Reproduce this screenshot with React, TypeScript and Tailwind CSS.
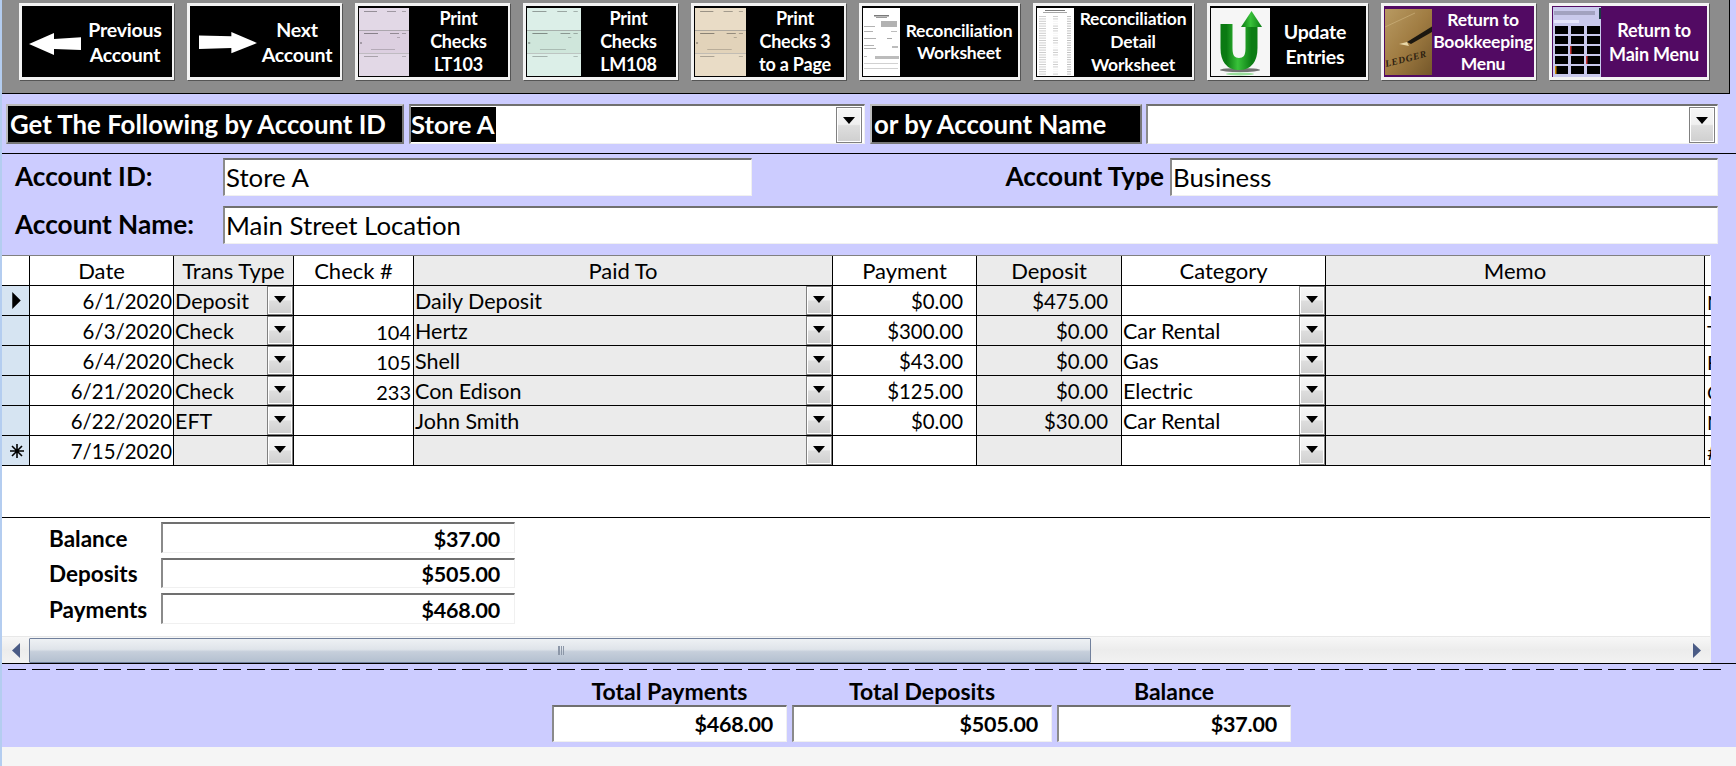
import type { ReactNode } from "react";

// Access-style account register form: toolbar, account pickers, fields,
// transaction grid and totals. Thumbnails on the toolbar are small SVG drawings.

function Bars({ rows }: { rows: number[][] }) {
  return (
    <>
      {rows.map(([x, y, bw, bh, o], i) => (
        <rect key={i} x={x} y={y} width={bw} height={bh} fill="#222" opacity={o} />
      ))}
    </>
  );
}

function CheckThumb({ color, band, w }: { color: string; band: string; w: number }) {
  return (
    <svg viewBox="0 0 50 68" preserveAspectRatio="none" style={{ width: w }} className="h-[68px] shrink-0">
      <rect width="50" height="68" fill={color} />
      <rect y="22" width="50" height="23" fill={band} />
      <rect y="22" width="50" height="0.6" fill="#8a8a8a" />
      <rect y="45" width="50" height="0.6" fill="#a8a8a8" />
      <Bars
        rows={[
          [5, 3, 13, 1, 0.4],
          [28, 3, 9, 1, 0.35],
          [43, 3, 4, 1, 0.3],
          [5, 25, 14, 1, 0.45],
          [31, 25, 9, 1, 0.4],
          [43, 25, 4, 1, 0.3],
          [1, 34, 2, 2, 0.3],
          [38, 29, 3, 1, 0.25],
          [12, 41, 24, 0.7, 0.3],
          [5, 48, 14, 1, 0.3],
          [43, 48, 4, 1, 0.25],
        ]}
      />
    </svg>
  );
}

function ReportThumb({ w, dense }: { w: number; dense?: boolean }) {
  const rows: number[][] = [];
  if (dense) {
    rows.push([8, 2, 20, 1, 0.6], [6, 4, 24, 1, 0.4]);
    for (let y = 8; y < 66; y += 2.4) {
      rows.push([2, y, 7, 1, 0.22], [16, y, 5, 1, y % 3 < 1 ? 0.05 : 0.22], [30, y, 4, 1, 0.28]);
    }
  } else {
    rows.push(
      [11, 7, 15, 1.5, 0.6],
      [13, 9, 11, 1, 0.45],
      [18, 13, 16, 6, 0.35],
      [1, 18, 11, 1, 0.35],
      [1, 23, 9, 1, 0.35],
      [28, 23, 6, 1, 0.3],
      [1, 30, 12, 1, 0.35],
      [24, 30, 5, 1, 0.4],
      [1, 37, 10, 1, 0.35],
      [1, 40, 12, 1, 0.35],
      [29, 38, 6, 2, 0.3],
      [1, 48, 3, 1, 0.3],
      [12, 48, 24, 3, 0.3],
      [1, 55, 34, 0.6, 0.35],
      [1, 60, 34, 0.6, 0.35],
    );
  }
  return (
    <svg viewBox="0 0 37 68" preserveAspectRatio="none" style={{ width: w }} className="h-[68px] shrink-0">
      <rect width="37" height="68" fill="#fff" />
      <Bars rows={rows} />
    </svg>
  );
}

function UpdateThumb() {
  return (
    <svg viewBox="0 0 59 68" className="h-[68px] w-[59px] shrink-0">
      <defs>
        <linearGradient id="u-green" x1="0" x2="1" y1="0" y2="0">
          <stop offset="0" stopColor="#0b7a12" />
          <stop offset="0.45" stopColor="#39c23a" />
          <stop offset="1" stopColor="#0c7d14" />
        </linearGradient>
      </defs>
      <rect width="59" height="68" fill="#f6f6f6" />
      <ellipse cx="29" cy="62" rx="20" ry="2" fill="#3a3a3a" opacity="0.7" />
      <ellipse cx="29" cy="66" rx="14" ry="1.5" fill="#9adf9c" />
      <path d="M15.5 16V40Q15.5 56 28 56Q40.5 56 40.5 40V18" fill="none" stroke="url(#u-green)" strokeWidth="12" />
      <polygon points="30,19 51,19 40.5,3" fill="url(#u-green)" />
    </svg>
  );
}

function LedgerThumb() {
  return (
    <svg viewBox="0 0 47 66" className="h-[66px] w-[47px] shrink-0">
      <defs>
        <linearGradient id="ledger" x1="0" x2="1" y1="0" y2="1">
          <stop offset="0" stopColor="#b89a62" />
          <stop offset="0.5" stopColor="#a07c42" />
          <stop offset="1" stopColor="#74572a" />
        </linearGradient>
      </defs>
      <rect width="47" height="66" fill="url(#ledger)" />
      <path d="M0 18L30 4" stroke="#d8c08c" strokeWidth="1" opacity="0.5" />
      <text x="1" y="58" fontFamily="Liberation Serif, serif" fontStyle="italic" fontWeight="700" fontSize="9.5" textLength="42" fill="#2c2010" transform="rotate(-14 1 58)">
        LEDGER
      </text>
      <path d="M22 33L48 17L47 23L26 35Z" fill="#1b1710" />
      <path d="M22 33L14 35L24 37Z" fill="#e9d8a8" />
    </svg>
  );
}

function MenuThumb() {
  const cellColors = ["#000", "#000", "#000"];
  return (
    <svg viewBox="0 0 48 70" className="h-[70px] w-[48px] shrink-0">
      <rect width="48" height="70" fill="#c9c9ec" />
      <rect x="1" y="4" width="41" height="4" fill="#5a5a70" opacity="0.35" />
      <rect x="46" y="1" width="2" height="11" fill="#1d3a44" />
      <rect x="1" y="13" width="25" height="3" fill="#e6e6fa" />
      {[19, 29, 39, 49, 59].map((y) =>
        cellColors.map((c, i) => <rect key={`${y}-${i}`} x={2 + i * 16} y={y} width="13" height="8" fill={c} />),
      )}
      <rect x="17" y="39" width="1.5" height="8" fill="#c33" />
      <rect x="33" y="49" width="1.5" height="8" fill="#c33" />
      <rect x="2" y="59" width="1.5" height="8" fill="#c80" />
    </svg>
  );
}

function ArrowThumb({ dir }: { dir: "left" | "right" }) {
  return (
    <svg
      viewBox="0 0 52 26"
      preserveAspectRatio="none"
      className={dir === "left" ? "mt-[4px] ml-[6px] h-[22px] w-[52px] shrink-0" : "mt-[3px] ml-[8px] h-[22px] w-[58px] shrink-0"}
    >
      {dir === "left" ? (
        <polygon points="0,13 25,0 25,7 52,5 52,20 25,19 25,26" fill="#fff" />
      ) : (
        <polygon points="52,13 29,0 29,5 0,4 0,20 29,19 29,25" fill="#fff" />
      )}
    </svg>
  );
}

type Btn = { w: string; lines: string[]; thumb: ReactNode; purple?: boolean; text: string };

const BUTTONS: Btn[] = [
  { w: "w-[155px]", lines: ["Previous", "Account"], thumb: <ArrowThumb dir="left" />, text: "pr-[3px] text-[19.5px] leading-[25px]" },
  { w: "w-[155px]", lines: ["Next", "Account"], thumb: <ArrowThumb dir="right" />, text: "pr-[3px] text-[19.5px] leading-[25px]" },
  { w: "w-[155px]", lines: ["Print", "Checks", "LT103"], thumb: <CheckThumb color="#e2d8e6" band="#dccfe0" w={50} />, text: "text-[18px] leading-[23px]" },
  { w: "w-[155px]", lines: ["Print", "Checks", "LM108"], thumb: <CheckThumb color="#dcefe8" band="#cfe6db" w={54} />, text: "text-[18px] leading-[23px]" },
  { w: "w-[155px]", lines: ["Print", "Checks 3", "to a Page"], thumb: <CheckThumb color="#e9dcc6" band="#e2d3ba" w={51} />, text: "text-[18px] leading-[23px]" },
  { w: "w-[161px]", lines: ["Reconciliation", "Worksheet"], thumb: <ReportThumb w={37} />, text: "text-[17.5px] leading-[22px]" },
  { w: "w-[161px]", lines: ["Reconciliation", "Detail", "Worksheet"], thumb: <ReportThumb w={37} dense />, text: "text-[17.5px] leading-[23px]" },
  { w: "w-[161px]", lines: ["Update", "Entries"], thumb: <UpdateThumb />, text: "mt-[5px] pr-[6px] text-[19.5px] leading-[25.5px]" },
  { w: "w-[155px]", lines: ["Return to", "Bookkeeping", "Menu"], thumb: <LedgerThumb />, purple: true, text: "text-[17.5px] leading-[22px]" },
  { w: "w-[160px]", lines: ["Return to", "Main Menu"], thumb: <MenuThumb />, purple: true, text: "text-[18px] leading-[24px]" },
];

function ToolButton({ btn }: { btn: Btn }) {
  return (
    <div className={`${btn.w} h-[77px] shrink-0 border-[3px] border-r-2 border-[#f3f3f3] shadow-[1px_1px_0_#555]`}>
      <div className={`flex h-full items-center pl-px ${btn.purple ? "bg-[#520a63]" : "bg-black"}`}>
        {btn.thumb}
        <div className={`min-w-0 flex-1 whitespace-nowrap text-center font-bold tracking-[-0.2px] text-white ${btn.text}`}>
          {btn.lines.map((l) => (
            <div key={l}>{l}</div>
          ))}
        </div>
      </div>
    </div>
  );
}

function DropArrow({ className }: { className: string }) {
  return (
    <div className={`flex shrink-0 justify-center border border-[#808080] bg-[linear-gradient(#f6f6f6_0,#f0f0f0_48%,#dedede_52%,#cfcfcf_100%)] shadow-[inset_0_0_0_1px_#fff] ${className}`}>
      <svg viewBox="0 0 12 7" className="mt-[9px] h-[7px] w-[12px]">
        <polygon points="0,0 12,0 6,7" fill="#000" />
      </svg>
    </div>
  );
}

const GRID =
  "grid grid-cols-[28px_144px_120px_120px_419px_144px_145px_204px_379px_6px] auto-rows-[30px]";

type Row = {
  date: string;
  type: string;
  check: string;
  paid: string;
  pay: string;
  dep: string;
  cat: string;
  memo: string;
  mark: "current" | "new" | "";
};

const ROWS: Row[] = [
  { date: "6/1/2020", type: "Deposit", check: "", paid: "Daily Deposit", pay: "$0.00", dep: "$475.00", cat: "", memo: "N", mark: "current" },
  { date: "6/3/2020", type: "Check", check: "104", paid: "Hertz", pay: "$300.00", dep: "$0.00", cat: "Car Rental", memo: "T", mark: "" },
  { date: "6/4/2020", type: "Check", check: "105", paid: "Shell", pay: "$43.00", dep: "$0.00", cat: "Gas", memo: "F", mark: "" },
  { date: "6/21/2020", type: "Check", check: "233", paid: "Con Edison", pay: "$125.00", dep: "$0.00", cat: "Electric", memo: "C", mark: "" },
  { date: "6/22/2020", type: "EFT", check: "", paid: "John Smith", pay: "$0.00", dep: "$30.00", cat: "Car Rental", memo: "N", mark: "" },
  { date: "7/15/2020", type: "", check: "", paid: "", pay: "", dep: "", cat: "", memo: "#", mark: "new" },
];

const CELL = "flex items-center overflow-hidden whitespace-nowrap border-r border-b border-black";
const GREY = "bg-[#ebebeb]";

function HeadCell({ label, grey }: { label: string; grey?: boolean }) {
  return <div className={`${CELL} justify-center text-[22px] ${grey ? GREY : "bg-white"}`}>{label}</div>;
}

function ComboCell({ value, grey }: { value: string; grey?: boolean }) {
  return (
    <div className={`${CELL} justify-between pl-px text-[21.5px] ${grey ? GREY : "bg-white"}`}>
      <span className="pt-[2px]">{value}</span>
      <DropArrow className="h-[29px] w-[26px] self-start" />
    </div>
  );
}

function Marker({ mark }: { mark: Row["mark"] }) {
  return (
    <div className="flex items-center justify-center border-r border-b border-black bg-[#d6e4f2]">
      {mark === "current" && (
        <svg viewBox="0 0 8 16" className="ml-[2px] h-[17px] w-[9px]">
          <polygon points="0,0 8,8 0,16" fill="#000" />
        </svg>
      )}
      {mark === "new" && (
        <svg viewBox="0 0 14 14" className="ml-[3px] h-[14px] w-[14px]" stroke="#000" strokeWidth="1.6">
          <path d="M7 0V14M0 7H14M2 2L12 12M12 2L2 12" />
        </svg>
      )}
    </div>
  );
}

function Grid() {
  return (
    <div className={`${GRID} border-t border-[#808080]`}>
      <div className="border-r border-b border-black bg-white" />
      <HeadCell label="Date" />
      <HeadCell label="Trans Type" grey />
      <HeadCell label="Check #" />
      <HeadCell label="Paid To" grey />
      <HeadCell label="Payment" />
      <HeadCell label="Deposit" grey />
      <HeadCell label="Category" />
      <HeadCell label="Memo" grey />
      <div className="border-b border-black bg-white" />
      {ROWS.map((r) => (
        <div key={r.date} className="contents">
          <Marker mark={r.mark} />
          <div className={`${CELL} justify-end bg-white pt-[2px] pr-[1px] text-[20.4px]`}>{r.date}</div>
          <ComboCell value={r.type} grey />
          <div className={`${CELL} justify-end bg-white pt-[2px] pr-[2px] text-[20px]`}>{r.check}</div>
          <ComboCell value={r.paid} grey />
          <div className={`${CELL} justify-end bg-white pt-[2px] pr-[13px] text-[20.4px]`}>{r.pay}</div>
          <div className={`${CELL} justify-end pt-[2px] pr-[13px] text-[20.4px] ${GREY}`}>{r.dep}</div>
          <ComboCell value={r.cat} />
          <div className={`${CELL} ${GREY}`} />
          <div className="flex items-center overflow-hidden whitespace-nowrap border-b border-black bg-white pt-[2px] pl-[2px] text-[20px]">
            {r.memo}
          </div>
        </div>
      ))}
    </div>
  );
}

const BEVEL = "border-2 border-r border-b border-[#f0f0f0] border-t-[#707070] border-l-[#8a8a8a] bg-white";

function SubTotal({ label, value }: { label: string; value: string }) {
  return (
    <div className="flex h-[30.5px] items-center">
      <div className="w-[159px] pt-[3px] pl-[47px] text-[22.5px] font-bold">{label}</div>
      <div className={`${BEVEL} flex h-full w-[354px] items-center justify-end pt-[2px] pr-[14px] text-[21.5px] font-bold tracking-[-0.2px]`}>
        {value}
      </div>
    </div>
  );
}

function GrandTotal({ label, value, w }: { label: string; value: string; w: string }) {
  return (
    <div className={`${w} flex flex-col`}>
      <div className="h-[27px] text-center text-[23px] font-bold leading-[27px]">{label}</div>
      <div className={`${BEVEL} flex h-[37px] items-center justify-end pr-[13px] text-[21.5px] font-bold tracking-[-0.2px]`}>
        {value}
      </div>
    </div>
  );
}

function BlackLabel({ text, w }: { text: string; w: string }) {
  return (
    <div className={`${w} flex h-[40px] shrink-0 items-center border-2 border-t-[#bbb] border-l-[#bbb] border-r-[#777] border-b-[#777] bg-black pl-[2px] text-[25.8px] font-bold text-white`}>
      {text}
    </div>
  );
}

export default function App() {
  return (
    <div className="flex h-[766px] w-[1736px] overflow-hidden bg-[#f5f5f5] font-[Lato,sans-serif] text-black">
      <div className="w-[2px] shrink-0 bg-[#b4cdf0]" />
      <div className="flex min-w-0 flex-1 flex-col">
        <div className="h-[154px] border-b border-black bg-[#ccccff]">
          <div className="flex h-[94px] w-[1728px] gap-[13px] border-r border-b border-black bg-[#8c8c8c] pt-[3px] pl-[17px]">
            {BUTTONS.map((b) => (
              <ToolButton key={b.lines.join(" ")} btn={b} />
            ))}
          </div>
          <div className="flex gap-[5px] pt-[10px] pl-[4px]">
            <BlackLabel text="Get The Following by Account ID" w="w-[398px]" />
            <div className={`${BEVEL} flex h-[40px] w-[456px] items-center justify-between pr-[2px]`}>
              <span className="h-[35px] w-[85px] bg-black text-[25.6px] font-bold leading-[35px] whitespace-nowrap text-white">
                Store A
              </span>
              <DropArrow className="h-[36px] w-[26px]" />
            </div>
            <BlackLabel text="or by Account Name" w="w-[272px]" />
            <div className={`${BEVEL} -ml-px flex h-[40px] w-[572px] items-center justify-end pr-[2px]`}>
              <DropArrow className="h-[36px] w-[26px]" />
            </div>
          </div>
        </div>

        <div className="flex h-[101px] flex-col gap-[10px] bg-[#ccccff] pt-[4px] pr-[18px]">
          <div className="flex h-[38px] items-center text-[25.8px]">
            <div className="w-[221px] pl-[13px] text-[26.2px] font-bold">Account ID:</div>
            <div className={`${BEVEL} flex h-full w-[529px] items-center pl-[1px]`}>Store A</div>
            <div className="w-[418px] pr-[6px] text-right text-[26.2px] font-bold">Account Type</div>
            <div className={`${BEVEL} flex h-full flex-1 items-center pl-[1px]`}>Business</div>
          </div>
          <div className="flex h-[38px] items-center text-[25.8px]">
            <div className="w-[221px] pl-[13px] text-[26.2px] font-bold">Account Name:</div>
            <div className={`${BEVEL} flex h-full flex-1 items-center pl-[1px]`}>Main Street Location</div>
          </div>
        </div>

        <div className="flex h-[408px] bg-[#ccccff]">
          <div className="flex w-[1709px] flex-col border-r border-[#f0f0f0] bg-white">
            <Grid />
            <div className="mt-[51px] flex h-[120px] flex-col gap-[5px] border-t border-black pt-[4px]">
              <SubTotal label="Balance" value="$37.00" />
              <SubTotal label="Deposits" value="$505.00" />
              <SubTotal label="Payments" value="$468.00" />
            </div>
            <div className="flex h-[27px] items-center border-t border-[#e8e8e8] bg-[linear-gradient(#f7f7f7,#ececec_50%,#f2f2f2)]">
              <div className="flex w-[27px] justify-center">
                <svg viewBox="0 0 8 15" className="h-[15px] w-[8px]">
                  <polygon points="8,0 0,7.5 8,15" fill="#4a5b85" />
                </svg>
              </div>
              <div className="relative h-[25px] w-[1062px] rounded-[1px] border border-[#71809c] bg-[linear-gradient(#eef1f4,#dfe4ea_45%,#c6cfdb_55%,#b4c0d0)]">
                <div className="absolute top-[7px] left-[528px] h-[9px] w-[6px] border-x border-[#8c97a8] bg-[repeating-linear-gradient(to_right,#8c97a8_0,#8c97a8_1px,transparent_1px,transparent_2px)]" />
              </div>
              <div className="flex flex-1 justify-end pr-[9px]">
                <svg viewBox="0 0 8 15" className="h-[15px] w-[8px]">
                  <polygon points="0,0 8,7.5 0,15" fill="#4a5b85" />
                </svg>
              </div>
            </div>
          </div>
        </div>

        <div className="h-[84px] border-t border-black bg-[#ccccff] pt-[5px]">
          <div className="ml-[6px] h-px w-[1716px] bg-[repeating-linear-gradient(to_right,#000_0,#000_17.9px,transparent_17.9px,transparent_23.88px)]" />
          <div className="flex gap-[5px] pt-[8px] pl-[550px]">
            <GrandTotal label="Total Payments" value="$468.00" w="w-[235px]" />
            <GrandTotal label="Total Deposits" value="$505.00" w="w-[260px]" />
            <GrandTotal label="Balance" value="$37.00" w="w-[234px]" />
          </div>
        </div>
      </div>
    </div>
  );
}
